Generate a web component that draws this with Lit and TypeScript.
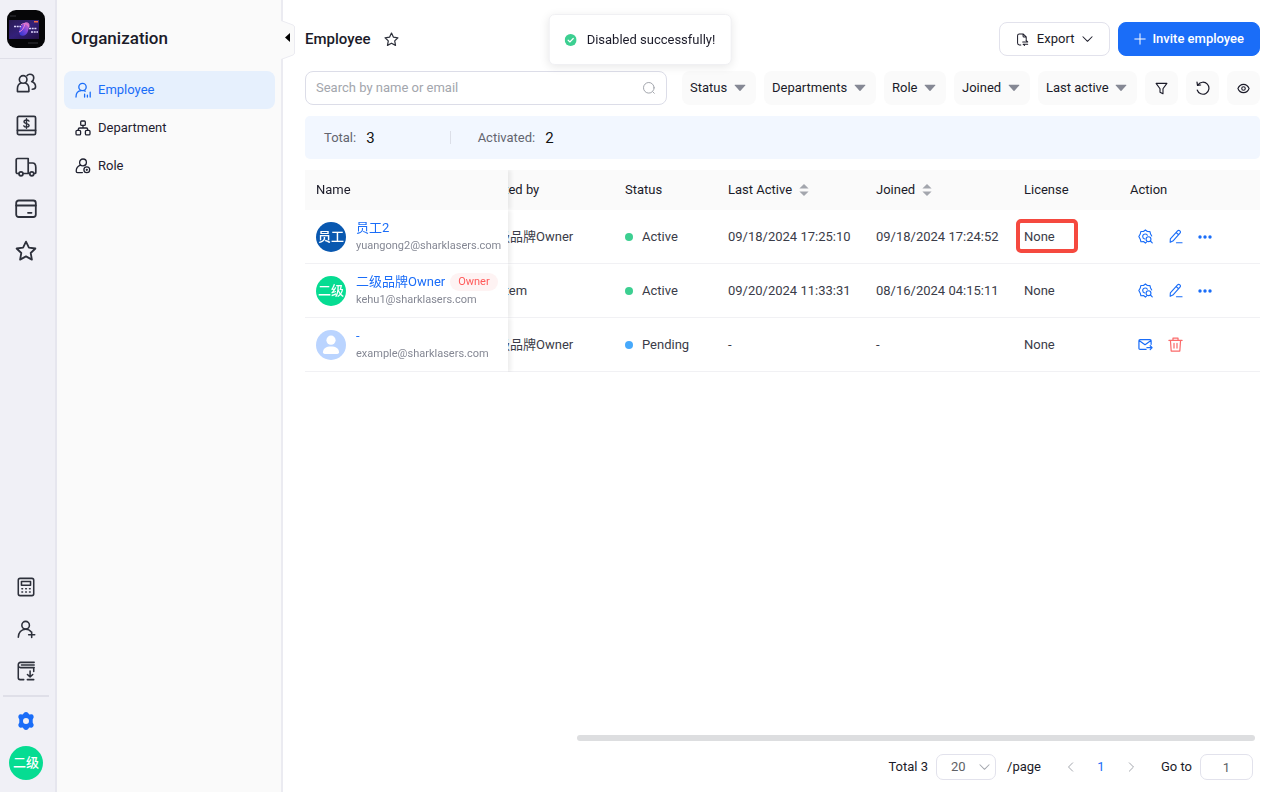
import { LitElement, html, css, svg, nothing, TemplateResult } from "lit";
import { customElement, state } from "lit/decorators.js";
import { classMap } from "lit/directives/class-map.js";

const icon = (body: unknown, size = 18, box = 24, width = 2) => html`<svg
  width=${size} height=${size} viewBox="0 0 ${box} ${box}" fill="none" stroke="currentColor"
  stroke-width=${width} stroke-linecap="round" stroke-linejoin="round" aria-hidden="true">${body}</svg>`;

const starPath = svg`<path d="M11 1.6 13.9 7.6 20.4 8.5 15.7 13 16.9 19.6 11 16.4 5.1 19.6 6.3 13 1.6 8.5 8.1 7.6Z"/>`;

const icons = {
  people: icon(svg`<circle cx="7.5" cy="6.8" r="4"/><path d="M5.2 10.6C2.7 11.6 1.5 13.6 1.5 16.5V19.5H13.5V16.5C13.5 13.6 12.3 11.6 9.8 10.6"/><path d="M11.5 2.8C12.3 1.7 13.3 1.3 14.5 1.3 17 1.3 18.6 3 18.6 5.2 18.6 7 17.8 8.2 16.4 9 19 10 20.5 11.8 20.5 14.5 20.5 16 19 17 17 17"/>`, 21, 22, 1.7),
  dollar: icon(svg`<rect x="1.5" y="1.5" width="19" height="19" rx="1.5"/><path d="M1.5 16H20.5"/><path d="M13.6 6.4C13 5.6 12.2 5.2 11 5.2 9.4 5.2 8.4 6 8.4 7.1 8.4 9.8 13.7 8.2 13.7 10.8 13.7 12 12.6 12.7 11 12.7 9.7 12.7 8.7 12.2 8.2 11.3M11 3.9V14" stroke-width="1.5"/>`, 21, 22, 1.8),
  truck: icon(svg`<path d="M3.5 17.5H2.5C1.8 17.5 1.2 17 1.2 16.2V3.7C1.2 3 1.8 2.5 2.5 2.5H13.2V17.5H8.5M13.2 7H17.5C19.6 7 20.8 9 20.8 11.5V16.5C20.8 17 20.4 17.5 19.8 17.5H19M13.2 17.5H14.5"/><circle cx="6" cy="17.8" r="2"/><circle cx="16.8" cy="17.8" r="2"/>`, 22, 22, 1.7),
  card: icon(svg`<rect x="1.2" y="2.5" width="19.6" height="16.5" rx="2.5"/><path d="M1.2 7.5H20.8M13 14.8H16.5"/>`, 22, 22, 1.8),
  star: icon(starPath, 22, 22, 1.8),
  calculator: icon(svg`<rect x="2.5" y="1.5" width="17" height="19" rx="2"/><rect x="6" y="5" width="10" height="4"/><path d="M6.5 13H7.2M10.7 13H11.4M14.9 13H15.6M6.5 16.6H7.2M10.7 16.6H11.4M14.9 16.6H15.6"/>`, 20, 22, 1.7),
  addUser: icon(svg`<circle cx="10" cy="6" r="4.4"/><path d="M1.5 20C1.5 14.5 5 10.6 10 10.6 13 10.6 15.2 12 16.3 13.6M13.5 17H20.5M17 13.8V20.2"/>`, 19, 22, 1.8),
  book: icon(svg`<path d="M20 1.5H5C3.5 1.5 2.5 2.8 2.5 4.2V18.5C2.5 19.8 3.3 20.5 4.5 20.5H8.5M20 7.3H5C3.5 7.3 2.5 6 2.5 4.4M19.5 7.3V11.5M6 4.4H20M15.5 11V17.5M12.6 14.8 15.5 17.6 18.4 14.8M12.5 20.5H19.5"/>`, 20, 22, 1.7),
  gearSolid: html`<svg width="18" height="18" viewBox="0 0 18 18" aria-hidden="true"><path fill="currentColor" fill-rule="evenodd" d="M7.1.7C7.8-.2 10.2-.2 10.9.7L12.3 2.6 14.7 2.3C15.9 2.3 17 4.3 16.6 5.4L15.7 7.6V10.4L16.6 12.6C17 13.7 15.9 15.7 14.7 15.7L12.3 15.4 10.9 17.3C10.2 18.2 7.8 18.2 7.1 17.3L5.7 15.4 3.3 15.7C2.1 15.7 1 13.7 1.4 12.6L2.3 10.4V7.6L1.4 5.4C1 4.3 2.1 2.3 3.3 2.3L5.7 2.6ZM9 6A3 3 0 1 0 9 12 3 3 0 1 0 9 6Z"/></svg>`,
  employee: icon(svg`<circle cx="7.5" cy="5" r="3.7"/><path d="M1 15C1 11.3 3.2 8.8 6.2 8.6M8.8 8.7C9.4 8.8 9.8 9 10.2 9.2M9.6 12.2V15M12.4 13.2V15M15.2 10.2V15"/>`, 16, 16, 1.3),
  department: icon(svg`<rect x="5.7" y="1" width="4.6" height="4.4" rx="1"/><rect x="1" y="10.3" width="4.6" height="4.6" rx="1.2"/><rect x="10.4" y="10.3" width="4.6" height="4.6" rx="1.2"/><path d="M8 5.5V8M3.3 10.2V9.3C3.3 8.5 3.8 8 4.6 8H11.4C12.2 8 12.7 8.5 12.7 9.3V10.2"/>`, 16, 16, 1.3),
  role: icon(svg`<circle cx="8" cy="4.4" r="3.4"/><path d="M5.6 7.2C2.8 8.2 1.2 10.6 1.2 13.2 1.2 14.2 1.6 14.6 2.6 14.6H7.4"/><circle cx="11.8" cy="11.8" r="2.9"/><circle cx="11.8" cy="11.8" r=".5"/>`, 16, 16, 1.3),
  favorite: icon(starPath, 15, 22, 1.8),
  exportDoc: icon(svg`<path d="M5.2 12.8H3.6C2.4 12.8 1.7 12.1 1.7 10.9V3C1.7 1.8 2.4 1 3.6 1H7.6L11 4.2V7M7.6 1V3.2C7.6 4 8 4.3 8.6 4.3H11M7.2 9.6H12.6L10.8 7.9M12.6 12H7.6L9.2 13.4"/>`, 13, 14, 1.1),
  chevronDown: icon(svg`<path d="M1 3 6 8 11 3"/>`, 11, 12, 1.1),
  chevronLeft: icon(svg`<path d="M8 1 3 6 8 11"/>`, 10, 12, 1.2),
  chevronRight: icon(svg`<path d="M4 1 9 6 4 11"/>`, 10, 12, 1.2),
  plus: icon(svg`<path d="M6 .8V11.2M.8 6H11.2"/>`, 12, 12, 1),
  search: icon(svg`<circle cx="6.8" cy="6.8" r="5.3"/><path d="M10.8 10.8 12.3 12.3"/>`, 14, 14, 1),
  filter: icon(svg`<path d="M1.2 1.5H12.8L8.6 7.3V12.6L5.4 11V7.3Z"/>`, 13, 14, 1.2),
  reset: icon(svg`<path d="M2 3.8A6 6 0 1 1 1.2 9M1 1.2 1.5 4.4 4.7 4"/>`, 14, 14, 1.2),
  eye: icon(svg`<path d="M1 7C2.2 4 4.4 2.5 7 2.5S11.8 4 13 7C11.8 10 9.6 11.5 7 11.5S2.2 10 1 7Z"/><circle cx="7" cy="7" r="1.9"/>`, 13, 14, 1.2),
  access: icon(svg`<path d="M9 14 7.9 15 5.9 13.4 3.1 13.6 2.4 10.9.9 8 2.4 5.4 3 2.7 5.8 2.6 7.9 1 10 2.6 12.8 2.8 13.4 5.4 14.6 7.4M7.2 10.6C5.8 10.3 5 9.2 5 8 5 6.5 6.2 5.3 7.7 5.3 8.7 5.3 9.5 5.8 10 6.6"/><circle cx="11.2" cy="10.8" r="2.6"/><path d="M13.2 12.8 15.2 14.8"/>`, 15, 16, 1.2),
  edit: icon(svg`<path d="M2.3 14.2 2.5 10.6 10.2 2.1C10.9 1.3 11.9 1.3 12.7 2 13.5 2.7 13.5 3.7 12.8 4.5L5.2 12.9ZM8.8 3.8 11.3 6.1M9 14.6H15"/>`, 15, 16, 1.2),
  more: html`<svg width="14" height="4" viewBox="0 0 14 4" fill="currentColor" aria-hidden="true"><circle cx="2" cy="2" r="1.7"/><circle cx="7" cy="2" r="1.7"/><circle cx="12" cy="2" r="1.7"/></svg>`,
  resend: icon(svg`<path d="M8.6 13.2H2.2C1.5 13.2 1 12.8 1 12.1V3.9C1 3.2 1.5 2.8 2.2 2.8H12.8C13.5 2.8 14 3.2 14 3.9V7.8M1.5 4 7.5 8.2 13.5 4M9.5 11.4H15M13 9.3 15 11.4 13 13.5"/>`, 15, 16, 1.3),
  trash: icon(svg`<path d="M1 3.6H15M5.3 3.4V1.2H10.7V3.4M2.6 3.8 3.4 15H12.6L13.4 3.8M6.4 6.8V11.8M9.6 6.8V11.8"/>`, 15, 16, 1.3),
  caret: html`<svg width="12" height="8" viewBox="0 0 12 8" aria-hidden="true"><path fill="#858894" d="M1 .8H11Q11.6.9 11.2 1.5L6.5 6.7Q6 7.1 5.5 6.7L.8 1.5Q.4.9 1 .8Z"/></svg>`,
  sort: html`<svg width="10" height="12" viewBox="0 0 10 12" aria-hidden="true"><path fill="#a3a6ad" d="M5 0 9.6 4.6H.4ZM5 12 9.6 7.4H.4Z"/></svg>`,
  success: html`<svg width="12" height="12" viewBox="0 0 12 12" aria-hidden="true"><circle cx="6" cy="6" r="6" fill="#3ccf91"/><path d="M3.5 6.2 5.3 7.9 8.6 4.5" fill="none" stroke="#fff" stroke-width="1.2" stroke-linecap="round"/></svg>`,
  logo: html`<svg width="38" height="38" viewBox="0 0 38 38" aria-hidden="true">
    <defs>
      <linearGradient id="sky" x1="0" y1="0" x2="1" y2="1"><stop offset="0" stop-color="#2a1b52"/><stop offset=".5" stop-color="#33207a"/><stop offset="1" stop-color="#241245"/></linearGradient>
      <linearGradient id="orb" x1="0" y1="1" x2="1" y2="0"><stop offset="0" stop-color="#2335c9"/><stop offset=".5" stop-color="#7b45dc"/><stop offset="1" stop-color="#f07ac0"/></linearGradient>
    </defs>
    <rect width="38" height="38" rx="9" fill="#060608"/>
    <rect x="2" y="10" width="30" height="19" fill="url(#sky)"/>
    <path d="M12 21C13 17 15 14 18 12.5 20 11.5 23 13 22.5 15.5L21 21C20 25 16 27 13 25Z" fill="url(#orb)"/>
    <path d="M14 15C17 12 21 14 22 17M12 22C15 21 17 18 18 14" stroke="#ef83cf" fill="none"/>
    <path d="M7 16.5H14M22 18.5H30M24 22H31" stroke="#dcd3fa" stroke-width="1.6" stroke-dasharray="2 .7" fill="none"/>
    <rect x="27" y="11" width="4" height="1.5" fill="#f06b43"/>
    <path d="M3 6H9M21 33H31" stroke="#34343a"/>
  </svg>`,
  person: html`<svg width="30" height="30" viewBox="0 0 30 30" aria-hidden="true"><circle cx="15" cy="10.2" r="4.6" fill="#fff"/><path fill="#fff" d="M7 22.2C7 18.2 10.2 16.4 15 16.4S23 18.2 23 22.2Q23 24 21.2 24H8.8Q7 24 7 22.2Z"/></svg>`,
};

interface Employee {
  name: string;
  email: string;
  avatar: string;
  tone: string;
  owner?: boolean;
  invitedBy: string;
  status: "Active" | "Pending";
  lastActive: string;
  joined: string;
  highlighted?: boolean;
}

const employees: Employee[] = [
  { name: "员工2", email: "yuangong2@sharklasers.com", avatar: "员工", tone: "navy", invitedBy: "二级品牌Owner", status: "Active", lastActive: "09/18/2024 17:25:10", joined: "09/18/2024 17:24:52", highlighted: true },
  { name: "二级品牌Owner", email: "kehu1@sharklasers.com", avatar: "二级", tone: "green", owner: true, invitedBy: "System", status: "Active", lastActive: "09/20/2024 11:33:31", joined: "08/16/2024 04:15:11" },
  { name: "-", email: "example@sharklasers.com", avatar: "", tone: "pale", invitedBy: "二级品牌Owner", status: "Pending", lastActive: "-", joined: "-" },
];

const base = css`
  * { box-sizing: border-box; }
  svg { display: block; flex: none; }
  button, input, select { font: inherit; color: inherit; margin: 0; }
  button { border: 0; background: none; padding: 0; cursor: pointer; }
  a { color: inherit; text-decoration: none; }
  .avatar { display: flex; align-items: center; justify-content: center; flex: none; border-radius: 50%; color: #fff; font-weight: 500; white-space: nowrap; overflow: hidden; }
  .navy { background: #0958b0; }
  .green { background: #06dc92; }
  .pale { background: #bad4ff; }
`;

@customElement("app-rail")
export class AppRail extends LitElement {
  static styles = [base, css`
    :host { display: flex; flex-direction: column; width: 57px; padding-right: 3px; background: #f0f0f6; border-right: 2px solid #e6e6ee; color: #2d303b; }
    .logo { padding: 10px 0 10px 7px; border-bottom: 1px solid #dfdfe8; }
    .group { display: flex; flex-direction: column; padding: 3px 0; }
    .push { margin-top: auto; }
    .item { display: flex; align-items: center; justify-content: center; height: 42px; }
    .current { color: #1a6df8; }
    .foot { display: flex; flex-direction: column; gap: 4px; margin: 0 3px; padding: 3px 0 12px; border-top: 2px solid #dfdfe8; }
    .me { width: 34px; height: 34px; align-self: center; font-size: 13px; }
  `];

  private link(label: string, glyph: TemplateResult) {
    return html`<a class="item" href="#" aria-label=${label}>${glyph}</a>`;
  }

  render() {
    return html`
      <a class="logo" href="#" aria-label="Home">${icons.logo}</a>
      <nav class="group">
        ${this.link("Customers", icons.people)}
        ${this.link("Finance", icons.dollar)}
        ${this.link("Logistics", icons.truck)}
        ${this.link("Cards", icons.card)}
        ${this.link("Favorites", icons.star)}
      </nav>
      <nav class="group push">
        ${this.link("Calculator", icons.calculator)}
        ${this.link("Add user", icons.addUser)}
        ${this.link("Guides", icons.book)}
      </nav>
      <div class="foot">
        <a class="item current" href="#" aria-label="Settings">${icons.gearSolid}</a>
        <button class="avatar green me">二级</button>
      </div>
    `;
  }
}

@customElement("app-sidebar")
export class AppSidebar extends LitElement {
  static styles = [base, css`
    :host { display: block; position: relative; width: 226px; padding: 0 6px 0 7px; background: #fafafa; border-right: 2px solid #ebebf1; }
    h2 { margin: 0; padding: 26px 7px 21px; font-size: 17px; font-weight: 500; line-height: 24px; color: #1b1b29; }
    nav { display: flex; flex-direction: column; }
    a { display: flex; align-items: center; gap: 7px; height: 38px; padding: 0 11px; border-radius: 8px; color: #1f2130; }
    a.active { background: #e6f0fd; color: #1a6df8; }
    .collapse { position: absolute; left: 100%; top: 20px; color: #000; }
  `];

  render() {
    return html`
      <h2>Organization</h2>
      <nav>
        <a class="active" href="#" aria-current="page">${icons.employee}Employee</a>
        <a href="#">${icons.department}Department</a>
        <a href="#">${icons.role}Role</a>
      </nav>
      <button class="collapse" aria-label="Collapse sidebar">
        <svg width="14" height="40" viewBox="0 0 14 40"><path d="M0 .5 12 5Q13.5 5.7 13.5 7V33Q13.5 34.3 12 35L0 39.5" fill="#fafafa" stroke="#ebebf1"/><path d="M9 13V22L4 17.5Z" fill="currentColor"/></svg>
      </button>
    `;
  }
}

@customElement("employee-table")
export class EmployeeTable extends LitElement {
  static styles = [base, css`
    :host { display: flex; flex-direction: column; flex: 1; min-height: 0; }
    .scroller { flex: 1; overflow: auto; scrollbar-width: none; }
    .scroller::-webkit-scrollbar { display: none; }
    table { width: 100%; min-width: 992px; table-layout: fixed; border-collapse: separate; border-spacing: 0; }
    .w-name { width: 203px; }
    .w-by { width: 142px; }
    .w-status { width: 103px; }
    .w-date { width: 148px; }
    .w-license { width: 106px; }
    th, td { padding: 0 12px; text-align: left; white-space: nowrap; }
    th { height: 40px; background: #fafafa; font-weight: 400; color: #1b1b29; }
    td { height: 54px; border-bottom: 1px solid #f1f1f4; background: #fff; color: #3a3c48; }
    th:first-child, td:first-child { position: sticky; left: 0; z-index: 1; padding: 0 0 0 11px; box-shadow: 3px 0 4px rgba(0, 0, 0, 0.07); clip-path: inset(0 -8px 0 0); }
    .by { padding-left: 13px; }
    .sortable { display: flex; align-items: center; gap: 7px; }
    .person { display: flex; align-items: center; gap: 10px; }
    .pic { width: 30px; height: 30px; font-size: 13px; }
    .info { display: flex; flex-direction: column; line-height: 18px; }
    .line { display: flex; align-items: center; gap: 5px; color: #1a6df8; }
    .email { font-size: 11px; color: #858894; }
    .tag { padding: 0 8px; border-radius: 9px; background: #fef3f3; color: #ff5a5a; font-size: 11px; }
    .status { display: flex; align-items: center; gap: 9px; }
    .dot { width: 8px; height: 8px; border-radius: 50%; background: #3ccf91; }
    .dot.pending { background: #47a9fb; }
    .license { position: relative; }
    .mark { position: absolute; left: 4px; top: 9px; width: 62px; height: 34px; border: 4px solid #f5493f; border-radius: 5px; }
    .actions { display: flex; align-items: center; gap: 10px; padding-left: 5px; color: #1a6df8; }
    .actions button { display: flex; align-items: center; justify-content: center; width: 20px; height: 20px; }
    .actions .danger { color: #fb6a6a; }
    .thumb { width: 71%; height: 6px; margin: 0 5px 0 auto; border-radius: 3px; background: #dddee0; }
  `];

  firstUpdated() {
    const scroller = this.renderRoot.querySelector(".scroller")!;
    scroller.scrollLeft = scroller.scrollWidth;
  }

  private row(e: Employee) {
    const pending = e.status === "Pending";
    return html`<tr>
      <td>
        <div class="person">
          <span class="avatar pic ${e.tone}">${e.avatar || icons.person}</span>
          <div class="info">
            <div class="line"><a href="#">${e.name}</a>${e.owner ? html`<span class="tag">Owner</span>` : nothing}</div>
            <span class="email">${e.email}</span>
          </div>
        </div>
      </td>
      <td class="by">${e.invitedBy}</td>
      <td><div class="status"><span class=${classMap({ dot: true, pending })}></span>${e.status}</div></td>
      <td>${e.lastActive}</td>
      <td>${e.joined}</td>
      <td class="license">None${e.highlighted ? html`<span class="mark"></span>` : nothing}</td>
      <td>
        <div class="actions">
          ${pending
            ? html`<button aria-label="Resend invitation">${icons.resend}</button><button class="danger" aria-label="Delete">${icons.trash}</button>`
            : html`<button aria-label="Permissions">${icons.access}</button><button aria-label="Edit">${icons.edit}</button><button aria-label="More">${icons.more}</button>`}
        </div>
      </td>
    </tr>`;
  }

  render() {
    return html`
      <div class="scroller">
        <table>
          <colgroup>
            <col class="w-name"><col class="w-by"><col class="w-status"><col class="w-date"><col class="w-date"><col class="w-license"><col>
          </colgroup>
          <thead>
            <tr>
              <th>Name</th><th class="by">Invited by</th><th>Status</th>
              <th><button class="sortable">Last Active ${icons.sort}</button></th>
              <th><button class="sortable">Joined ${icons.sort}</button></th>
              <th>License</th><th>Action</th>
            </tr>
          </thead>
          <tbody>${employees.map((e) => this.row(e))}</tbody>
        </table>
      </div>
      <div class="thumb"></div>
    `;
  }
}

@customElement("app-root")
export class AppRoot extends LitElement {
  static styles = [base, css`
    :host { display: flex; height: 100vh; overflow: hidden; background: #fff; color: #1b1b29; font: 13px/20px Roboto, "Noto Sans CJK SC", sans-serif; }
    app-rail, app-sidebar { flex: none; }
    main { display: flex; flex-direction: column; flex: 1; min-width: 0; padding: 22px 20px 12px 22px; }
    .head { display: flex; align-items: center; gap: 8px; margin-bottom: 15px; }
    h1 { margin: 0; font-size: 15px; font-weight: 500; line-height: 20px; padding-bottom: 1px; }
    .fav { margin: 0 auto 0 5px; color: #2d303b; }
    .btn { display: flex; align-items: center; gap: 8px; height: 34px; padding: 0 16px; border: 1px solid #e2e2ec; border-radius: 8px; }
    .primary { gap: 6px; padding: 0 15px; background: #1a6df8; border-color: #1a6df8; color: #fff; font-weight: 500; }
    .filters { display: flex; gap: 8px; margin-bottom: 11px; }
    .search { display: flex; align-items: center; flex: 1; min-width: 120px; height: 34px; margin-right: 7px; padding: 0 10px; border: 1px solid #dcdde8; border-radius: 8px; color: #a3a6ad; }
    .search input { flex: 1; min-width: 0; border: 0; outline: 0; padding: 0; background: none; }
    .search input::placeholder { color: #a3a6ad; opacity: 1; }
    .pick { display: grid; align-items: center; }
    .pick select { grid-area: 1 / 1; appearance: none; height: 34px; padding: 0 28px 0 8px; border: 0; border-radius: 8px; background: #fafafa; }
    .pick svg { grid-area: 1 / 1; justify-self: end; margin-right: 10px; pointer-events: none; }
    .tool { display: flex; align-items: center; justify-content: center; width: 33px; height: 34px; border-radius: 8px; background: #fafafa; }
    .stats { display: flex; align-items: center; height: 43px; margin-bottom: 11px; padding: 0 19px; border-radius: 5px; background: #f2f7ff; color: #63656f; }
    .stat { display: flex; align-items: center; gap: 10px; }
    .stat b { font-size: 15px; font-weight: 400; color: #111; }
    .stat + .stat { margin-left: 75px; padding-left: 28px; background: linear-gradient(#dcdfe8, #dcdfe8) left center / 1px 13px no-repeat; }
    .pager { display: flex; align-items: center; justify-content: flex-end; gap: 8px; padding: 13px 7px 0 0; }
    .size select { width: 60px; height: 26px; padding: 0 0 0 14px; border: 1px solid #e2e2ec; border-radius: 7px; background: #fff; color: #606266; }
    .size svg { margin-right: 6px; color: #a3a6ad; }
    .unit { margin-left: 3px; }
    .pages { display: flex; margin: 0 7px; }
    .pages button { display: flex; align-items: center; justify-content: center; width: 30px; height: 26px; color: #a3a6ad; }
    .pages .on { color: #1a6df8; }
    .go { width: 53px; height: 26px; padding: 0; border: 1px solid #e2e2ec; border-radius: 7px; text-align: center; color: #606266; }
    .toast { position: fixed; top: 14px; left: 50%; transform: translateX(-50%); display: flex; align-items: center; gap: 10px; height: 51px; padding: 0 15px; border: 1px solid #f0f0f3; border-radius: 6px; background: #fff; box-shadow: 0 2px 10px rgba(0, 0, 0, 0.09); white-space: nowrap; }
  `];

  @state() private page = 1;

  private pick(label: string) {
    return html`<label class="pick"><select aria-label=${label}><option>${label}</option></select>${icons.caret}</label>`;
  }

  render() {
    return html`
      <app-rail></app-rail>
      <app-sidebar></app-sidebar>
      <main>
        <header class="head">
          <h1>Employee</h1>
          <button class="fav" aria-label="Add to favorites">${icons.favorite}</button>
          <button class="btn">${icons.exportDoc}Export ${icons.chevronDown}</button>
          <button class="btn primary">${icons.plus}Invite employee</button>
        </header>
        <div class="filters">
          <label class="search"><input type="text" aria-label="Search" placeholder="Search by name or email">${icons.search}</label>
          ${["Status", "Departments", "Role", "Joined", "Last active"].map((l) => this.pick(l))}
          <button class="tool" aria-label="Filter">${icons.filter}</button>
          <button class="tool" aria-label="Reset">${icons.reset}</button>
          <button class="tool" aria-label="Columns">${icons.eye}</button>
        </div>
        <div class="stats">
          <span class="stat">Total: <b>3</b></span>
          <span class="stat">Activated: <b>2</b></span>
        </div>
        <employee-table></employee-table>
        <footer class="pager">
          <span>Total 3</span>
          <label class="pick size"><select aria-label="Rows per page"><option>20</option></select>${icons.chevronDown}</label>
          <span class="unit">/page</span>
          <div class="pages">
            <button aria-label="Previous page">${icons.chevronLeft}</button>
            <button class="on">${this.page}</button>
            <button aria-label="Next page">${icons.chevronRight}</button>
          </div>
          <label for="go">Go to</label>
          <input id="go" class="go" type="text" .value=${String(this.page)}>
        </footer>
      </main>
      <div class="toast" role="status">${icons.success}Disabled successfully!</div>
    `;
  }
}
